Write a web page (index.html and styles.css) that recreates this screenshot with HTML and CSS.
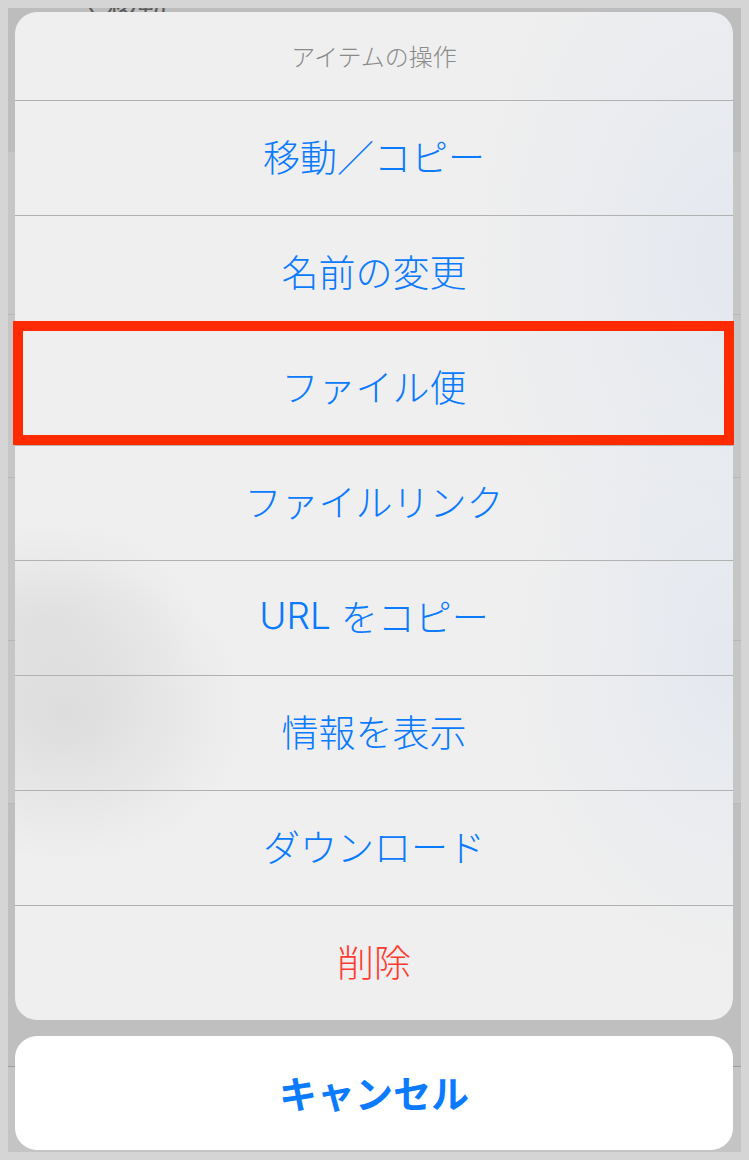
FILE: index.html
```html
<!DOCTYPE html>
<html lang="ja">
<head>
    <meta charset="UTF-8">
    <title>アイテムの操作</title>
    <meta name="viewport" content="width=device-width, initial-scale=1.0">
    <link rel="stylesheet" href="styles.css">
</head>
<body>
    <div class="screen">
        <!-- 背後のアプリ画面（暗くなっている） -->
        <div class="app">
            <header class="nav">
                <span class="nav-back">〈 移動</span>
            </header>
            <ul class="list">
                <li></li>
                <li></li>
                <li></li>
                <li></li>
            </ul>
            <div class="list-rest"></div>
            <nav class="tabbar">
                <span class="tab tab-on">ファイル一覧</span>
                <span class="tab">履歴</span>
                <span class="tab">設定</span>
                <span class="tab">送信履歴一覧</span>
            </nav>
        </div>

        <!-- アクションシート -->
        <div class="sheet-wrap">
            <div class="sheet">
                <div class="sheet-title">アイテムの操作</div>
                <button class="action">移動／コピー</button>
                <button class="action">名前の変更</button>
                <button class="action">ファイル便</button>
                <button class="action">ファイルリンク</button>
                <button class="action"><span class="latin">URL</span>をコピー</button>
                <button class="action">情報を表示</button>
                <button class="action">ダウンロード</button>
                <button class="action action-danger">削除</button>
                <div class="mark"></div>
            </div>
            <button class="cancel">キャンセル</button>
        </div>
    </div>
</body>
</html>
```

FILE: styles.css
```css
body {
    margin: 0;
    background: #d5d5d5;
    font-family: "Noto Sans CJK JP", sans-serif;
}
.screen {
    margin: 8px;
    width: 733px;
    height: 1144px;
    background: #c6c6c6;
    position: relative;
    overflow: hidden;
}

/* 背後の画面 */
.app {
    display: flex;
    flex-direction: column;
    height: 100%;
}
.nav {
    height: 144px;
    background: #bdbdbd;
    flex-shrink: 0;
    padding-left: 62px;
}
.nav-back {
    display: block;
    margin-top: -26px;
    font-size: 30px;
    color: #5a5a5a;
}
.list { list-style: none; margin: 0; padding: 0; }
.list li {
    height: 162px;
    border-bottom: 1px solid #b7b7b7;
    background: #c6c6c6;
}
.list-rest { flex: 1; background: #bfbfbf; }
.tabbar {
    height: 85px;
    flex-shrink: 0;
    background: #c4c4c4;
    border-top: 1px solid #9c9c9c;
    display: flex;
    justify-content: space-around;
    align-items: flex-end;
    font-size: 20px;
    color: #6f6f6f;
}
.tab { margin-bottom: -26px; }
.tab-on { color: #1f5fa8; }

/* アクションシート */
.sheet-wrap {
    position: absolute;
    left: 7px;
    top: 4px;
    width: 718px;
    display: flex;
    flex-direction: column;
    gap: 16px;
}
.sheet {
    position: relative;
    border-radius: 22px;
    background:
        radial-gradient(ellipse 180px 150px at 50px 700px, #dcdcdc, transparent),
        radial-gradient(ellipse 150px 100px at 30px 610px, #e2e2e2, transparent),
        radial-gradient(ellipse 260px 400px at 718px 250px, #e4e8ef, transparent),
        radial-gradient(ellipse 220px 300px at 718px 650px, #e4e8ef, transparent),
        #efefef;
    display: flex;
    flex-direction: column;
}
.sheet-title {
    height: 88px;
    padding-bottom: 2px;
    box-sizing: border-box;
    display: flex;
    align-items: center;
    justify-content: center;
    font-size: 24px;
    font-weight: 300;
    color: #8a8a8a;
}
.action {
    height: 115px;
    border: 0;
    border-top: 1px solid #b1b1b1;
    background: transparent;
    padding: 0 0 5px;
    font-family: inherit;
    font-size: 37px;
    font-weight: 300;
    color: #0a7aff;
    display: flex;
    align-items: center;
    justify-content: center;
    cursor: pointer;
}
.latin { font-family: Inter, sans-serif; margin-right: 10px; }
.action-danger { color: #ff3b30; }
.mark {
    position: absolute;
    top: 309px;
    left: -2px;
    width: 721px;
    height: 124px;
    border: 10px solid #ff2a00;
    box-sizing: border-box;
}
.cancel {
    height: 114px;
    border: 0;
    border-radius: 22px;
    background: #fff;
    padding: 0 0 4px;
    font-family: inherit;
    font-size: 38px;
    font-weight: 700;
    color: #0a7aff;
    cursor: pointer;
}
```
